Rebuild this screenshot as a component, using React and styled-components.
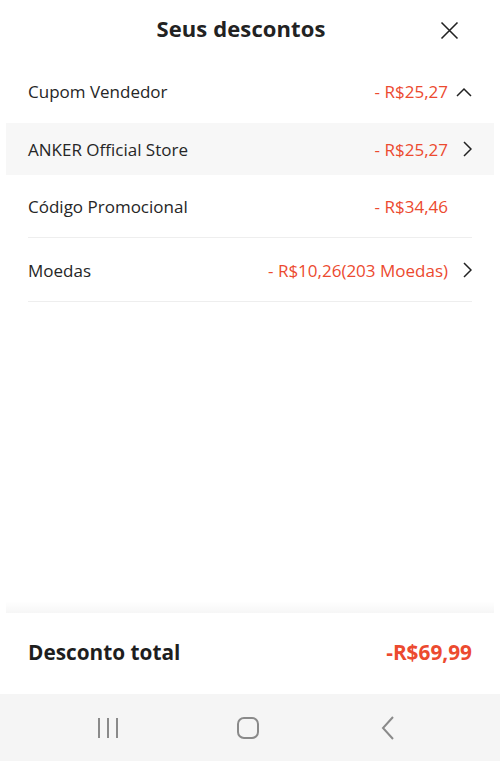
import React from "react";
import styled, { createGlobalStyle } from "styled-components";

const Global = createGlobalStyle`
  html, body { margin: 0; padding: 0; background: #fff; }
  body { font-family: "Open Sans", "Noto Sans", sans-serif; -webkit-font-smoothing: antialiased; }
  * { box-sizing: border-box; }
`;

const Page = styled.div`
  width: 500px;
  height: 761px;
  display: flex;
  flex-direction: column;
  background: #fff;
  overflow: hidden;
`;

const Header = styled.div`
  height: 60px;
  padding: 0 18px 4px 0;
  display: flex;
  align-items: center;
  justify-content: center;
  position: relative;
`;

const Title = styled.h1`
  margin: 0;
  font-size: 22px;
  font-weight: 700;
  color: #222;
  letter-spacing: 0.1px;
`;

const CloseBtn = styled.button`
  position: absolute;
  right: 40px;
  top: 19px;
  width: 22px;
  height: 22px;
  padding: 0;
  border: 0;
  background: none;
  display: flex;
  align-items: center;
  justify-content: center;
`;

const List = styled.div`
  display: flex;
  flex-direction: column;
`;

const Row = styled.div`
  height: ${(p) => (p.$h ? p.$h : 63)}px;
  margin: 0 6px;
  padding: 0 22px;
  display: flex;
  align-items: center;
  background: ${(p) => (p.$active ? "#f7f7f7" : "transparent")};
  position: relative;
  &::after {
    content: "";
    display: ${(p) => (p.$divider ? "block" : "none")};
    position: absolute;
    left: 22px;
    right: 22px;
    bottom: 0;
    height: 1px;
    background: #eeeeee;
  }
`;

const Label = styled.span`
  flex: 1;
  font-size: 17px;
  color: #262626;
`;

const Value = styled.span`
  font-size: 17px;
  color: #ec4a2f;
`;

const IconSlot = styled.span`
  width: 24px;
  display: flex;
  align-items: center;
  justify-content: flex-end;
`;

const Spacer = styled.div`
  flex: 1;
`;

const Shade = styled.div`
  height: 12px;
  margin: 0 6px;
  background: linear-gradient(to bottom, rgba(255,255,255,0), rgba(0,0,0,0.035));
`;

const Footer = styled.div`
  height: 81px;
  padding: 0 28px 4px;
  display: flex;
  align-items: center;
  justify-content: space-between;
`;

const TotalLabel = styled.span`
  font-size: 20.8px;
  font-weight: 700;
  color: #1e1e1e;
`;

const TotalValue = styled.span`
  font-size: 20.8px;
  font-weight: 700;
  color: #ec4a2f;
`;

const NavBar = styled.div`
  height: 67px;
  background: #f5f5f5;
  display: grid;
  grid-template-columns: 1fr 1fr 1fr;
  align-items: center;
  padding: 0 42px 0 38px;
`;

const NavItem = styled.div`
  display: flex;
  justify-content: center;
`;

const ChevronUp = () => (
  <svg width="16" height="10" viewBox="0 0 16 10" fill="none">
    <path d="M1 9 L8 2 L15 9" stroke="#222" strokeWidth="1.5" />
  </svg>
);

const ChevronRight = () => (
  <svg width="10" height="16" viewBox="0 0 10 16" fill="none">
    <path d="M2 1 L9 8 L2 15" stroke="#222" strokeWidth="1.5" />
  </svg>
);

const rows = [
  { label: "Cupom Vendedor", value: "- R$25,27", icon: "up", h: 63 },
  { label: "ANKER Official Store", value: "- R$25,27", icon: "right", active: true, h: 52 },
  { label: "Código Promocional", value: "- R$34,46", divider: true, h: 63 },
  { label: "Moedas", value: "- R$10,26(203 Moedas)", icon: "right", divider: true, h: 64 },
];

export default function App() {
  return (
    <Page>
      <Global />
      <Header>
        <Title>Seus descontos</Title>
        <CloseBtn aria-label="Fechar">
          <svg width="19" height="19" viewBox="0 0 19 19" fill="none">
            <path d="M1.5 1.5 L17.5 17.5 M17.5 1.5 L1.5 17.5" stroke="#222" strokeWidth="1.6" />
          </svg>
        </CloseBtn>
      </Header>
      <List>
        {rows.map((r) => (
          <Row key={r.label} $active={r.active} $divider={r.divider} $h={r.h}>
            <Label>{r.label}</Label>
            <Value>{r.value}</Value>
            <IconSlot>
              {r.icon === "up" && <ChevronUp />}
              {r.icon === "right" && <ChevronRight />}
            </IconSlot>
          </Row>
        ))}
      </List>
      <Spacer />
      <Shade />
      <Footer>
        <TotalLabel>Desconto total</TotalLabel>
        <TotalValue>-R$69,99</TotalValue>
      </Footer>
      <NavBar>
        <NavItem>
          <svg width="22" height="22" viewBox="0 0 22 22" fill="none">
            <path d="M2 1 V21 M11 1 V21 M20 1 V21" stroke="#8a8a8a" strokeWidth="2" />
          </svg>
        </NavItem>
        <NavItem>
          <svg width="24" height="24" viewBox="0 0 24 24" fill="none">
            <rect x="2" y="2" width="20" height="20" rx="6" stroke="#8a8a8a" strokeWidth="2" />
          </svg>
        </NavItem>
        <NavItem>
          <svg width="16" height="26" viewBox="0 0 16 26" fill="none">
            <path d="M13 2 L3 13 L13 24" stroke="#8a8a8a" strokeWidth="2" />
          </svg>
        </NavItem>
      </NavBar>
    </Page>
  );
}
